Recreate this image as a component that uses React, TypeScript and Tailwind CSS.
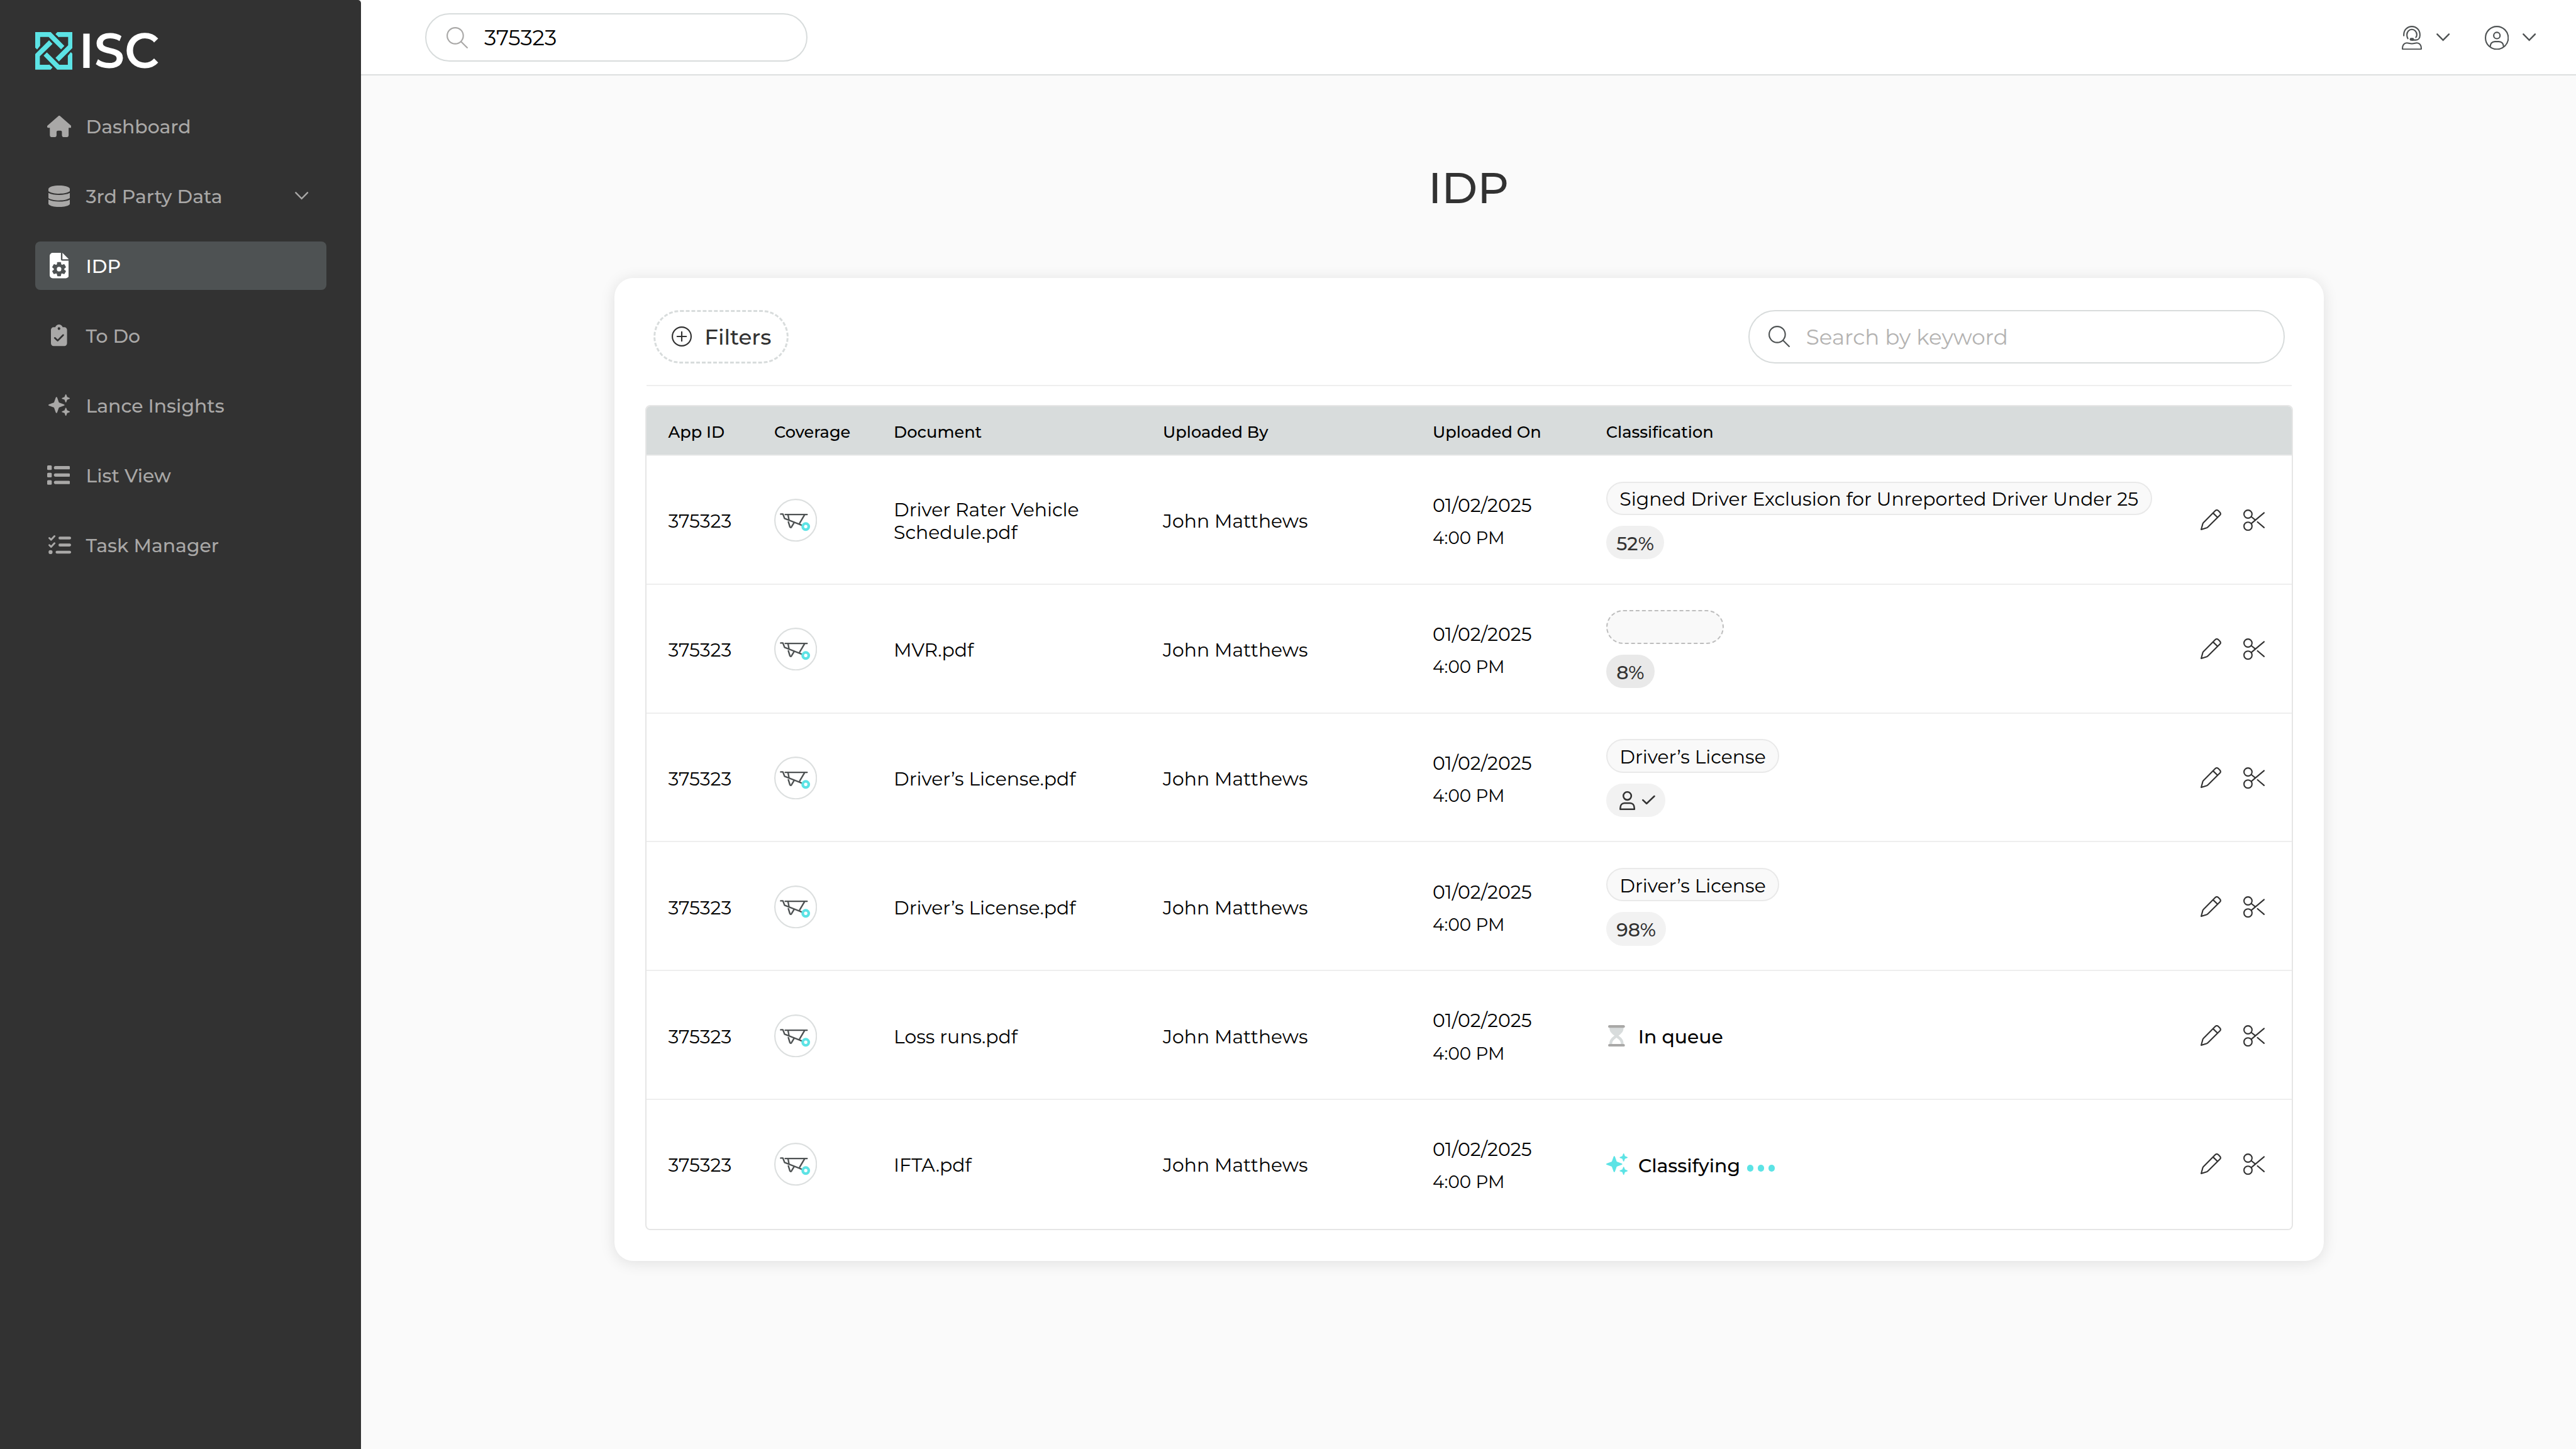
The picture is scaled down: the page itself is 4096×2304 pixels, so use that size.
import type { ReactNode } from 'react';
import clsx from 'clsx';

function HouseIcon() {
  return (
    <svg viewBox="0 0 72 64" className="w-[38.4px]" fill="currentColor">
      <path d="M33 1.2a4.500 4.500 0 0 1 6 0l31.600 28C73.600 32 72 36 69 36h-5v22a6 6 0 0 1-6 6h-8a6 6 0 0 1-6-6v-9.500a4 4 0 0 0-4-4h-8a4 4 0 0 0-4 4V58a6 6 0 0 1-6 6h-8a6 6 0 0 1-6-6V36H3c-3 0-4.600-4-1.600-6.800z" />
    </svg>
  );
}

function DatabaseIcon() {
  return (
    <svg viewBox="0 0 64 64" className="w-[34.1px]" fill="currentColor">
      <path d="M0 10C2 3 16 0 32 0s30 3 32 10v7c-7 5-19 7.500-32 7.500S7 22 0 17z" />
      <path d="M0 22c8 4 19 6 32 6s24-2 32-6v15.500c-7 4.700-19 7-32 7s-25-2.300-32-7z" />
      <path d="M0 42c8 4 19 6 32 6s24-2 32-6v13c-3 6-16 9-32 9S3 61 0 55z" />
    </svg>
  );
}

function FileGearIcon() {
  return (
    <svg viewBox="0 0 57 76" className="w-[30.4px]" fill="currentColor">
      <path d="M9 0h24.500v19.500a4 4 0 0 0 4 4H57V67a9 9 0 0 1-9 9H9a9 9 0 0 1-9-9V9a9 9 0 0 1 9-9z" />
      <path d="M38 0l19 19H38z" />
      <g fill="#4e5253" transform="translate(28 48.700)">
        <circle r="15.500" />
        <path id="tooth" d="M-5.500-20q.3-1 1.500-1h8q1.200 0 1.500 1L7-12V12L5.500 20q-.3 1-1.500 1h-8q-1.200 0-1.500-1L-7 12v-24z" />
        <use href="#tooth" transform="rotate(60)" />
        <use href="#tooth" transform="rotate(120)" />
      </g>
      <circle cx="28" cy="48.700" r="6.800" />
    </svg>
  );
}

function ClipboardIcon() {
  return (
    <svg viewBox="0 0 48 64" className="w-[25.6px]" fill="none">
      <path
        fill="currentColor"
        fillRule="evenodd"
        d="M8 8h5C14.500 3 19 0 24 0s9.500 3 11 8h5a8 8 0 0 1 8 8v40a8 8 0 0 1-8 8H8a8 8 0 0 1-8-8V16a8 8 0 0 1 8-8zm16 .2a4 4 0 1 0 0 8 4 4 0 0 0 0-8z"
      />
      <path d="M11.500 40L20 48l16.500-16.500" stroke="#323232" strokeWidth="5" strokeLinecap="round" strokeLinejoin="round" />
    </svg>
  );
}

function SparklesIcon({ className }: { className: string }) {
  return (
    <svg viewBox="0 0 64 64" className={className} fill="currentColor">
      <path d="M24 8c1 0 1.700.6 2 1.500l5 14q.4 1.100 1.500 1.500l14 5c.9.3 1.500 1 1.500 2s-.6 1.700-1.500 2l-14 5q-1.100.4-1.500 1.500l-5 14c-.3.900-1 1.500-2 1.500s-1.700-.6-2-1.500l-5-14q-.4-1.100-1.500-1.500l-14-5C.6 33.700 0 33 0 32s.6-1.700 1.500-2l14-5q1.100-.4 1.500-1.500l5-14c.3-.9 1-1.500 2-1.500z" />
      <path id="small-star" d="M52 0c.8 0 1.200.5 1.400 1.100l2.600 6.900 6.900 2.600c.6.200 1.100.6 1.100 1.400s-.5 1.200-1.100 1.400L56 16l-2.600 6.900c-.2.600-.6 1.100-1.400 1.100s-1.200-.5-1.400-1.100L48 16l-6.900-2.600c-.6-.2-1.100-.6-1.100-1.400s.5-1.200 1.100-1.400L48 8l2.600-6.900C50.800.5 51.200 0 52 0z" />
      <use href="#small-star" y="40" />
    </svg>
  );
}

function ListIcon() {
  return (
    <svg viewBox="0 0 69 58" className="mr-[2px] w-[36.8px]" fill="currentColor">
      <rect width="13.700" height="13.700" rx="3" />
      <rect y="22" width="13.700" height="13.700" rx="3" />
      <rect y="44" width="13.700" height="13.700" rx="3" />
      <rect x="20" y="2" width="49" height="9.600" rx="4.800" />
      <rect x="20" y="24" width="49" height="9.600" rx="4.800" />
      <rect x="20" y="46" width="49" height="9.600" rx="4.800" />
    </svg>
  );
}

function TaskIcon() {
  return (
    <svg viewBox="0 0 68 57" className="ml-[2px] w-[36.3px]" fill="currentColor">
      <g fill="none" stroke="currentColor" strokeWidth="5.500" strokeLinecap="round" strokeLinejoin="round">
        <path d="M2.800 8.500L8 13.500 18 3" />
        <path d="M2.800 29.500L8 34.500 18 24" />
      </g>
      <circle cx="6.300" cy="50.500" r="6" />
      <rect x="30" y="4" width="37.500" height="8.600" rx="4.300" />
      <rect x="30" y="25" width="37.500" height="8.600" rx="4.300" />
      <rect x="21.300" y="46.200" width="46.200" height="8.600" rx="4.300" />
    </svg>
  );
}

function Chevron({ className }: { className: string }) {
  return (
    <svg viewBox="0 0 40 24" className={className} fill="none" stroke="currentColor" strokeWidth="4.500" strokeLinecap="round">
      <path d="M2.500 2.500L20 20.500 37.500 2.500" />
    </svg>
  );
}

function SearchIcon({ className }: { className: string }) {
  return (
    <svg viewBox="0 0 64 64" className={className} fill="none" stroke="currentColor" strokeWidth="4">
      <circle cx="26" cy="26" r="24" />
      <path d="M43 43l20 20" />
    </svg>
  );
}

function AgentIcon() {
  return (
    <svg viewBox="0 0 60 72" className="w-[32px]" fill="none" stroke="currentColor" strokeWidth="4" strokeLinecap="round">
      <path d="M6 29.500V26a24 24 0 0 1 48 0v3c0 8-5 13.500-12 13.500H31" />
      <path d="M18 38c-2-3.500-2.800-7-2.800-11.500a14.800 15.800 0 0 1 29.600 0c0 3-.8 5.500-2.800 8" />
      <rect x="23.500" y="36" width="13" height="8.700" rx="4.300" fill="currentColor" stroke="none" />
      <path d="M2 67C2 58 7 51 15 51c5 0 8 2.500 15 2.500S40 51 45 51c8 0 13 7 13 16v1a2 2 0 0 1-2 2H4a2 2 0 0 1-2-2z" />
    </svg>
  );
}

function AccountIcon() {
  return (
    <svg viewBox="0 0 72 72" className="w-[38.4px]" fill="none" stroke="currentColor" strokeWidth="4">
      <circle cx="36" cy="36" r="34" />
      <circle cx="36" cy="29" r="9.500" />
      <path d="M16 62.500C16 53 22 47 30 47h12c8 0 14 6 14 15.500" />
    </svg>
  );
}

function PlusCircleIcon() {
  return (
    <svg viewBox="0 0 60 60" className="w-[32px]" fill="none" stroke="currentColor" strokeWidth="4" strokeLinecap="round">
      <circle cx="30" cy="30" r="28" />
      <path d="M30 16.500v27M16.500 30h27" />
    </svg>
  );
}

function WheelbarrowIcon() {
  return (
    <svg viewBox="0 0 128 128" className="w-[68.3px]" fill="none" stroke="#4e5253" strokeWidth="4.500" strokeLinecap="round" strokeLinejoin="round">
      <circle cx="64" cy="64" r="62" stroke="#dcdfdf" strokeWidth="4" />
      <path d="M19.500 45.700H26l5 13L82 79" />
      <path d="M33 47h65M41.300 48L44 62.500M90.300 48.700L75 74.500" />
      <path d="M42.300 69.300l4.500 14.500q2.200 4 5 0l7.500-12.500" />
      <circle cx="94" cy="83" r="9" stroke="#5ce3e5" strokeWidth="8" />
    </svg>
  );
}

function PencilIcon() {
  return (
    <svg viewBox="0 0 64 64" className="w-[34.1px]" fill="none" stroke="currentColor" strokeWidth="4" strokeLinejoin="round">
      <path d="M2 60L6.500 43q.6-2.200 2.200-3.800L44.500 3.500q4-3.500 8 0l5.500 5.500q3.500 4 0 8L22 52.500q-1.500 1.500-3.500 2.200z" />
      <path d="M37.500 11L51 24" />
    </svg>
  );
}

function ScissorsIcon() {
  return (
    <svg viewBox="0 0 64 64" className="w-[34.1px]" fill="none" stroke="currentColor" strokeWidth="4" strokeLinecap="round">
      <circle cx="14" cy="14" r="12" />
      <circle cx="14" cy="50" r="12" />
      <path d="M62 10L24 42M24 22l12.500 10M42.500 37.500L62 54.300" />
    </svg>
  );
}

function UserCheckIcon() {
  return (
    <svg viewBox="0 0 108 57" className="w-[57.6px]" fill="none" stroke="currentColor" strokeWidth="4.800" strokeLinecap="round" strokeLinejoin="round">
      <circle cx="23.500" cy="14.200" r="11.800" />
      <path d="M2.500 54v-3C2.500 41 8 35.500 15 35.500h17c7 0 12.500 5.500 12.500 15.500v3z" />
      <path d="M70 26.500l11 10.500 23-22" />
    </svg>
  );
}

function HourglassIcon() {
  return (
    <svg viewBox="0 0 50 64" className="w-[26.7px]">
      <path fill="#d8dcdc" d="M4 7h42c0 12-5 17-15 24.500C41 39 46 44 46 57H4c0-13 5-18 15-25.500C9 24 4 19 4 7z" />
      <path fill="#fff" d="M12 57c0-10 4.500-13 13-19.500C33.500 44 38 47 38 57z" />
      <rect width="50" height="8" rx="4" fill="#a9a8a7" />
      <rect y="56" width="50" height="8" rx="4" fill="#a9a8a7" />
    </svg>
  );
}

function Logo() {
  return (
    <div className="flex items-center gap-[10px]">
      <svg viewBox="0 0 112 112" className="w-[59.7px]" fill="#5ce3e5">
        <g id="knot">
          <path d="M0 0h46.300L87 41.500 77.200 51.500 40 14.400H14.700V41L5.600 52.200 0 46.500z" />
          <path d="M112 0H66l-5.600 6.300 10 9 1.200-.9h26.600v25.200L60.400 76.800l10.300 10.700L112 46.500z" />
        </g>
        <use href="#knot" transform="rotate(180 56 56)" />
      </svg>
      <span className="text-[76.800px] leading-[60px] font-semibold text-white">ISC</span>
    </div>
  );
}

const navItems = [
  { name: 'Dashboard', icon: <HouseIcon /> },
  { name: '3rd Party Data', icon: <DatabaseIcon />, expandable: true },
  { name: 'IDP', icon: <FileGearIcon />, active: true },
  { name: 'To Do', icon: <ClipboardIcon /> },
  { name: 'Lance Insights', icon: <SparklesIcon className="w-[34.1px]" /> },
  { name: 'List View', icon: <ListIcon /> },
  { name: 'Task Manager', icon: <TaskIcon /> },
];

function Sidebar() {
  return (
    <aside className="flex w-[574px] shrink-0 flex-col rounded-tr-[5px] bg-[#323232] px-[55.500px] pt-[51px] shadow-[0_0_14px_rgba(0,0,0,0.12)]">
      <Logo />
      <nav className="mt-[51.400px] flex flex-col gap-[34.100px]">
        {navItems.map((item) => (
          <div
            key={item.name}
            className={clsx(
              'flex h-[76.800px] items-center rounded-[8px] pr-[28px] pl-[17px] font-medium',
              item.active ? 'bg-[#4e5253] text-white' : 'text-[#a9a8a7]'
            )}
          >
            <span className="flex w-[43px] justify-center">{item.icon}</span>
            <span className="ml-[21px] flex-1 pt-[2px] text-[29.870px]">{item.name}</span>
            {item.expandable && <Chevron className="w-[21.300px]" />}
          </div>
        ))}
      </nav>
    </aside>
  );
}

function TopBar() {
  return (
    <header className="relative flex h-[119.500px] items-center justify-between border-b-2 border-[#dddfdf] bg-white pt-[2px] pr-[64px] pl-[102px]">
      <div className="flex h-[76.800px] w-[608px] items-center rounded-full border-2 border-[#d8dcdc] pl-[32px]">
        <SearchIcon className="w-[34.100px] text-[#a9a8a7]" />
        <span className="ml-[26px] pt-[2px] text-[34.130px] text-black">375323</span>
      </div>
      <div className="flex items-center text-[#4e5253]">
        <AgentIcon />
        <Chevron className="ml-[23.500px] w-[21.300px]" />
        <span className="ml-[55.500px]">
          <AccountIcon />
        </span>
        <Chevron className="ml-[21.300px] w-[21.300px]" />
      </div>
    </header>
  );
}

function LabelPill({ children }: { children: ReactNode }) {
  return (
    <span className="flex h-[53.300px] items-center rounded-full border-2 border-[#e9e9e9] bg-[#f9f9f9] px-[19.500px] pt-[2px] whitespace-nowrap">
      {children}
    </span>
  );
}

function ScorePill({ children, className }: { children: ReactNode; className: string }) {
  return (
    <span className={clsx('flex h-[53.300px] items-center rounded-full font-medium text-[#323232]', className)}>
      {children}
    </span>
  );
}

const rows = [
  {
    document: 'Driver Rater Vehicle Schedule.pdf',
    classification: (
      <>
        <LabelPill>Signed Driver Exclusion for Unreported Driver Under 25</LabelPill>
        <ScorePill className="bg-[#f0f0f0] px-[16.500px] pt-[3px]">52%</ScorePill>
      </>
    ),
  },
  {
    document: 'MVR.pdf',
    classification: (
      <>
        <span className="h-[53.300px] w-[187px] rounded-full border-2 border-dashed border-[#bdbdbd] bg-[#f9f9f9]" />
        <ScorePill className="bg-[#e9e9e9] px-[16.500px] pt-[3px]">8%</ScorePill>
      </>
    ),
  },
  {
    document: 'Driver’s License.pdf',
    classification: (
      <>
        <LabelPill>Driver’s License</LabelPill>
        <ScorePill className="bg-[#f2f2f2] pt-[1px] pr-[16px] pl-[21px]">
          <UserCheckIcon />
        </ScorePill>
      </>
    ),
  },
  {
    document: 'Driver’s License.pdf',
    classification: (
      <>
        <LabelPill>Driver’s License</LabelPill>
        <ScorePill className="bg-[#f2f2f2] px-[16.500px] pt-[3px]">98%</ScorePill>
      </>
    ),
  },
  {
    document: 'Loss runs.pdf',
    classification: (
      <div className="flex items-center font-medium">
        <span className="flex w-[34px] justify-center">
          <HourglassIcon />
        </span>
        <span className="ml-[17px] pt-[3px]">In queue</span>
      </div>
    ),
  },
  {
    document: 'IFTA.pdf',
    classification: (
      <div className="flex items-center font-medium">
        <SparklesIcon className="w-[34.100px] text-[#5ce3e5]" />
        <span className="ml-[17px] pt-[3px]">Classifying</span>
        <span className="mt-[12px] ml-[10.500px] flex gap-[6.500px]">
          <i className="size-[10.600px] rounded-full bg-[#5ce3e5]" />
          <i className="size-[10.600px] rounded-full bg-[#5ce3e5]" />
          <i className="size-[10.600px] rounded-full bg-[#5ce3e5]" />
        </span>
      </div>
    ),
  },
];

const gridCols = 'grid grid-cols-[168.500px_190px_428px_429px_275.700px_1fr_auto] items-center pr-[43.200px] pl-[34.600px]';

function DocumentsTable() {
  return (
    <div className="overflow-hidden rounded-[8px] border-2 border-[#e6e6e6] text-[29.870px] leading-[36.300px] text-black">
      <div className={clsx(gridCols, 'h-[79px] border-b-2 border-[#eeeeee] bg-[#d8dcdc] pt-[5px] text-[25.600px] font-medium')}>
        <span>App ID</span>
        <span>Coverage</span>
        <span>Document</span>
        <span>Uploaded By</span>
        <span>Uploaded On</span>
        <span>Classification</span>
      </div>
      {rows.map((row, i) => (
        <div key={i} className={clsx(gridCols, 'h-[204.800px] border-b-2 pt-[2px]', i < rows.length - 1 ? 'border-[#eeeeee]' : 'border-white')}>
          <span className="pt-[2px]">375323</span>
          <WheelbarrowIcon />
          <span className="w-[330px] pt-[2px]">{row.document}</span>
          <span className="pt-[2px]">John Matthews</span>
          <div className="flex flex-col pt-[4px] leading-[52.300px]">
            <span>01/02/2025</span>
            <span className="text-[27.730px]">4:00 PM</span>
          </div>
          <div className="flex flex-col items-start gap-[17px]">{row.classification}</div>
          <div className="flex gap-[34.100px] text-[#323232]">
            <PencilIcon />
            <ScissorsIcon />
          </div>
        </div>
      ))}
    </div>
  );
}

export default function App() {
  return (
    <div className="flex h-[2304px] w-[4096px] overflow-hidden bg-white font-['Montserrat','Inter',sans-serif]">
      <Sidebar />
      <div className="flex flex-1 flex-col">
        <TopBar />
        <main className="-z-0 flex flex-1 flex-col items-center bg-[#fafafa] pt-[128px]">
          <h1 className="text-[69px] leading-[100px] font-medium text-[#323232]">IDP</h1>
          <section className="mt-[94px] ml-[2px] w-[2718px] rounded-[30px] bg-white px-[49px] pt-[51.200px] pb-[49px] shadow-[0_3px_24px_rgba(0,0,0,0.11)]">
            <div className="flex items-center justify-between px-[12.800px] pb-[34.100px]">
              <button className="flex h-[85.300px] w-[215.500px] items-center rounded-full border-3 border-dashed border-[#d8dcdc] pl-[26px] text-[#323232]">
                <PlusCircleIcon />
                <span className="ml-[20.500px] pt-[2px] text-[34.130px] font-medium">Filters</span>
              </button>
              <div className="flex h-[85.300px] w-[853.500px] items-center rounded-full border-2 border-[#d8dcdc] pl-[30.500px]">
                <SearchIcon className="w-[34.100px] text-[#4e5253]" />
                <span className="ml-[25.500px] pt-[2px] text-[34.130px] text-[#b4b3b2]">Search by keyword</span>
              </div>
            </div>
            <div className="mx-[2px] mb-[30px] h-[2px] bg-[#eeeeee]" />
            <DocumentsTable />
          </section>
        </main>
      </div>
    </div>
  );
}
